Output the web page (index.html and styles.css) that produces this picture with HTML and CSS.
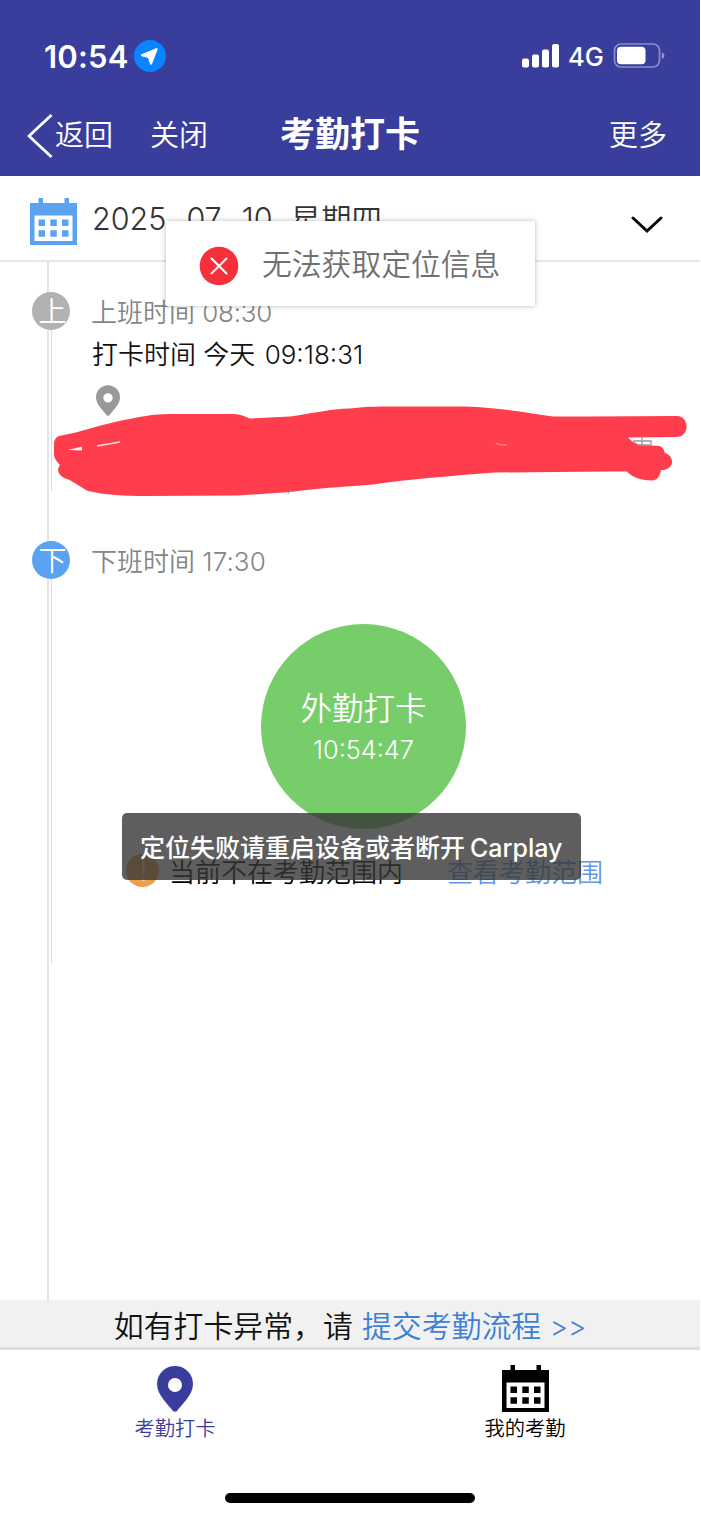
FILE: index.html
```html
<!DOCTYPE html>
<html lang="zh-CN">
<head>
<meta charset="utf-8">
<title>考勤打卡</title>
<link rel="stylesheet" href="styles.css">
</head>
<body>
<div class="screen">
  <header class="header">
    <div class="status">
      <span class="clock">10:54</span>
      <svg class="location" viewBox="0 0 32 32"><circle cx="16" cy="16" r="16" fill="#0a84ff"/><path d="M22.500 9.200 17 23.700 15 17.200 8 15.300Z" fill="#fff" stroke="#fff" stroke-width="2.200" stroke-linejoin="round"/></svg>
      <svg class="signal" viewBox="0 0 38 24" fill="#fff"><rect x="0" y="14.500" width="7" height="9" rx="2"/><rect x="10" y="10.500" width="7" height="13" rx="2"/><rect x="20" y="5.500" width="7" height="18" rx="2"/><rect x="30" y="0" width="7" height="23.500" rx="2"/></svg>
      <span class="network">4G</span>
      <svg class="battery" viewBox="0 0 52 26"><rect x="1.500" y="1" width="45" height="23" rx="6.500" fill="none" stroke="#8b8ccc" stroke-width="1.700"/><rect x="4" y="3.800" width="28.500" height="17.400" rx="4" fill="#fff"/><path d="M48.800 9.300q2.600 1 2.600 3.400t-2.600 3.400Z" fill="#9697cf"/></svg>
    </div>
    <nav class="nav">
      <svg class="back-icon" viewBox="0 0 26 44"><path d="M24.500 1 2 22 24.500 43" fill="none" stroke="#fff" stroke-width="2.800"/></svg>
      <span class="back">返回</span>
      <span class="close">关闭</span>
      <h1 class="title">考勤打卡</h1>
      <span class="more">更多</span>
    </nav>
  </header>

  <section class="datebar">
    <svg class="calendar" viewBox="0 0 48 48" fill="#5ba3f1"><path d="M0 5h8.500V0h4.500v5h21.500V0h4.500v5H47V47H0ZM4.500 17.500V43H42.500V17.500Z" fill-rule="evenodd"/><path d="M8.500 21.500h6.500v6.500H8.500ZM20.300 21.500h6.500v6.500h-6.500ZM32 21.500h6.500v6.500H32ZM8.500 32.300h6.500v6.500H8.500ZM20.300 32.300h6.500v6.500h-6.500ZM32 32.300h6.500v6.500H32Z"/></svg>
    <span class="date">2025<span class="dash">-</span>07<span class="dash">-</span>10<span class="weekday">星期四</span></span>
    <svg class="chevron" viewBox="0 0 32 18"><path d="M2 2 16 15 30 2" fill="none" stroke="#050505" stroke-width="3" stroke-linecap="round"/></svg>
  </section>

  <main class="timeline">
    <article class="entry entry-in">
      <span class="badge badge-in">上</span>
      <p class="shift">上班时间 <span class="shift-num">08:30</span></p>
      <p class="punched">打卡时间 今天 <span class="punched-num">09:18:31</span></p>
      <svg class="place" viewBox="0 0 36 46"><path d="M18 0a18 18 0 0 1 18 18c0 11-11 20-16 27q-2 1.500-4 0C11 38 0 29 0 18A18 18 0 0 1 18 0Zm0 12a7 7 0 1 0 0 14 7 7 0 0 0 0-14Z" fill="#999" fill-rule="evenodd"/></svg>
    </article>
    <article class="entry entry-out">
      <span class="badge badge-out">下</span>
      <p class="shift">下班时间 <span class="shift-num shift-end">17:30</span></p>
      <button class="punch"><span class="punch-label">外勤打卡</span><span class="punch-time">10:54:47</span></button>
      <div class="range">
        <svg class="warn" viewBox="0 0 33 33"><circle cx="16.500" cy="16.500" r="16.500" fill="#eda04b"/><path d="M17.500 7v14M17.500 24v3" stroke="#f8dcc0" stroke-width="2.200"/></svg>
        <span class="range-text">当前不在考勤范围内</span>
        <a class="range-link">查看考勤范围</a>
      </div>
    </article>
  </main>

  <div class="notice"><span>如有打卡异常，请</span><a class="submit">提交考勤流程 <span class="arrows">&gt;&gt;</span></a></div>

  <footer class="tabs">
    <div class="tab active">
      <svg class="tab-pin" viewBox="0 0 36 46"><path d="M18 0a18 18 0 0 1 18 18c0 11-11 20-16 27q-2 1.500-4 0C11 38 0 29 0 18A18 18 0 0 1 18 0Zm0 12a7 7 0 1 0 0 14 7 7 0 0 0 0-14Z" fill="#393e9c" fill-rule="evenodd"/></svg>
      <span>考勤打卡</span>
    </div>
    <div class="tab">
      <svg class="tab-calendar" viewBox="0 0 47 47" fill="#000"><path d="M0 5h8.500V0h4.500v5h21.500V0h4.500v5H47V47H0ZM4.500 17.500V43H42.500V17.500Z" fill-rule="evenodd"/><path d="M8.500 21.500h6.500v6.500H8.500ZM20.300 21.500h6.500v6.500h-6.500ZM32 21.500h6.500v6.500H32ZM8.500 32.300h6.500v6.500H8.500ZM20.300 32.300h6.500v6.500h-6.500ZM32 32.300h6.500v6.500H32Z"/></svg>
      <span>我的考勤</span>
    </div>
  </footer>
  <div class="home"></div>

  <svg class="scribble" viewBox="50 400 650 104">
    <path d="M59 436C82 432 102 424 124 420C140 417 152 414 170 414L234 414C242 414 246 418 251 418.500L290 416.500C315 413 330 409 350 408.500C370 406 385 406.500 410 406.500L465 406.500C500 407.500 527 413 553 416.500L590 416.500L677 416C690 416.500 690 437 676 437L628 437.500C631 441 634 443 640 444.500L659 446C664 447 664 451 665 453C675 456 675 470 661 470C660 476 658 480 652 480.500C640 480 632 477 627 471.500L607 471.500L495 472.500C450 476 410 479 373 484.500C340 487 310 489 290 492L238 495.500L145 496C125 496 105 495 88 491C80 487 72 480 64 478C57 474 57 469 60 465C56 461 54 458 54 454L54 444C54 440 56 437 59 436Z" fill="#ff3d4c"/>
    <path d="M68 450 82 446.500v4Z" fill="#fff4ee"/>
    <path d="M97 446 120 442" stroke="#ffe0da" stroke-width="1.600"/>
    <path d="M496 443.500 502 445 507 445" fill="none" stroke="#ff9999" stroke-width="1.200"/>
    <path d="M633 441H651V446M642 437V445M637 445H651" fill="none" stroke="#a39a9b" stroke-width="1.400"/>
    <path d="M291 490 288 494" stroke="#a99" stroke-width="1"/>
  </svg>

  <div class="dialog">
    <svg class="error" viewBox="0 0 40 40"><circle cx="20" cy="20" r="19.300" fill="#f5303b"/><path d="M12.500 12.500 27.500 27.500M27.500 12.500 12.500 27.500" stroke="#fff" stroke-width="2" stroke-linecap="round"/></svg>
    <span class="dialog-text">无法获取定位信息</span>
  </div>
  <div class="toast">定位失败请重启设备或者断开<span class="latin">Carplay</span></div>
</div>
</body>
</html>
```
FILE: styles.css
```css
* { box-sizing: border-box; }
body {
  margin: 0;
  background: #fff;
  font-family: Inter, "Noto Sans CJK SC", sans-serif;
  font-weight: 350;
  color: #111;
}
p, h1 { margin: 0; font-weight: 350; }
svg { display: block; flex: none; }
.screen {
  position: relative;
  width: 700px;
  height: 1518px;
  display: flex;
  flex-direction: column;
  overflow: hidden;
  white-space: nowrap;
}

.header { height: 176px; flex: none; background: #393e9c; color: #fff; }
.status { height: 95px; padding: 17px 35px 0 44px; display: flex; align-items: center; }
.clock { width: 90px; font-size: 31px; font-weight: 600; letter-spacing: .2px; }
.location { width: 32px; height: 32px; }
.signal { width: 38px; height: 24px; margin: -1px 0 0 auto; }
.network { width: 53px; padding-left: 8px; font-size: 25.500px; font-weight: 450; }
.battery { width: 52px; height: 26px; }
.nav { height: 81px; padding: 0 33px 0 27px; display: flex; align-items: center; font-size: 29px; line-height: 42px; }
.back-icon { width: 26px; height: 44px; }
.back { margin: 1px 0 0 2px; }
.close { margin: 1px 0 0 37px; }
.title { margin: -3px 0 0 72px; font-size: 35px; font-weight: 600; }
.more { margin: 1px 0 0 auto; }

.datebar { height: 86px; flex: none; padding: 0 37px 0 30px; display: flex; border-bottom: 2px solid #e7e7e9; }
.calendar { width: 48px; height: 48px; margin-top: 22px; }
.date { margin: 21px 0 0 14px; font-size: 30.500px; line-height: 44px; color: #333; }
.dash { position: relative; top: 3px; display: inline-block; width: 20px; text-align: center; }
.weekday { position: relative; top: 1px; margin-left: 18px; }
.chevron { width: 32px; height: 18px; margin: 40px 0 0 auto; }

.timeline { flex: 1; margin-left: 47px; padding-top: 31px; border-left: 2px solid #e4e4e6; }
.entry { position: relative; margin-left: 2px; padding-left: 39px; border-left: 1.500px solid #dedee0; }
.entry-in { height: 198px; }
.entry-out { height: 424px; margin-top: 50px; }
.badge {
  position: absolute;
  left: -20px;
  top: -1px;
  width: 38px;
  height: 38px;
  border-radius: 50%;
  text-align: center;
  font-size: 28px;
  line-height: 40px;
  text-indent: 3px;
  color: #fff;
}
.badge-in { background: #b2b2b2; }
.badge-out { top: 0; background: #5ba3f1; }
.shift { padding-top: 1px; font-size: 26px; line-height: 38px; color: #858585; }
.shift-num { letter-spacing: -.3px; }
.shift-end { letter-spacing: .1px; }
.entry-out .shift { padding-top: 2px; }
.punched { margin: 4px 0 0 1px; font-size: 26px; line-height: 38px; color: #111; }
.punched-num { margin-left: 2px; }
.place { width: 24px; height: 31px; margin: 11px 0 0 5px; }

.punch {
  display: flex;
  flex-direction: column;
  align-items: center;
  width: 205px;
  height: 205px;
  margin: 43px 0 0 170px;
  padding: 62px 0 0;
  border: 0;
  border-radius: 50%;
  background: #76cd69;
  color: #fff;
  font-family: inherit;
}
.punch-label { font-size: 31.500px; line-height: 46px; font-weight: 350; }
.punch-time { font-size: 25.300px; line-height: 36px; font-weight: 350; }
.range { height: 40px; margin: 21px 0 0 35px; display: flex; align-items: center; font-size: 26px; }
.warn { width: 33px; height: 33px; }
.range-text { margin: 1px 0 0 10px; color: #000; }
.range-link { margin: 1px 0 0 44px; color: #6196e4; }

.notice { height: 50px; flex: none; display: flex; justify-content: center; gap: 9px; background: #f1f1f1; border-bottom: 3px solid #e0e0e0; font-size: 29.900px; line-height: 52px; }
.submit { color: #3e7fd4; }
.arrows { font-size: 28px; }
.tabs { height: 125px; flex: none; display: flex; }
.tab { flex: 1; display: flex; flex-direction: column; align-items: center; font-size: 20.300px; line-height: 30px; color: #000; }
.tab-pin { width: 36px; height: 46px; margin: 16px 0 2px; }
.tab-calendar { width: 47px; height: 47px; margin: 15px 0 2px; }
.active { color: #393e9c; }
.home { width: 250px; height: 10px; margin: 18px auto 15px; flex: none; border-radius: 5px; background: #000; }

.scribble { position: absolute; left: 50px; top: 400px; width: 650px; height: 104px; }
.dialog {
  position: absolute;
  left: 166px;
  top: 221px;
  width: 369px;
  height: 85px;
  padding-left: 33px;
  display: flex;
  align-items: center;
  gap: 23px;
  background: #fff;
  box-shadow: 0 0 5px rgba(0, 0, 0, .28);
  font-size: 29.800px;
  color: #707070;
}
.error { width: 40px; height: 40px; margin-top: 5px; }
.dialog-text { margin-top: -4px; }
.toast {
  position: absolute;
  left: 122px;
  top: 813px;
  width: 459px;
  height: 67px;
  padding-left: 18px;
  border-radius: 5px;
  background: rgba(54, 54, 54, .8);
  color: #fff;
  font-size: 25px;
  line-height: 70px;
  font-weight: 500;
}
.latin { margin-left: 5px; }
```
